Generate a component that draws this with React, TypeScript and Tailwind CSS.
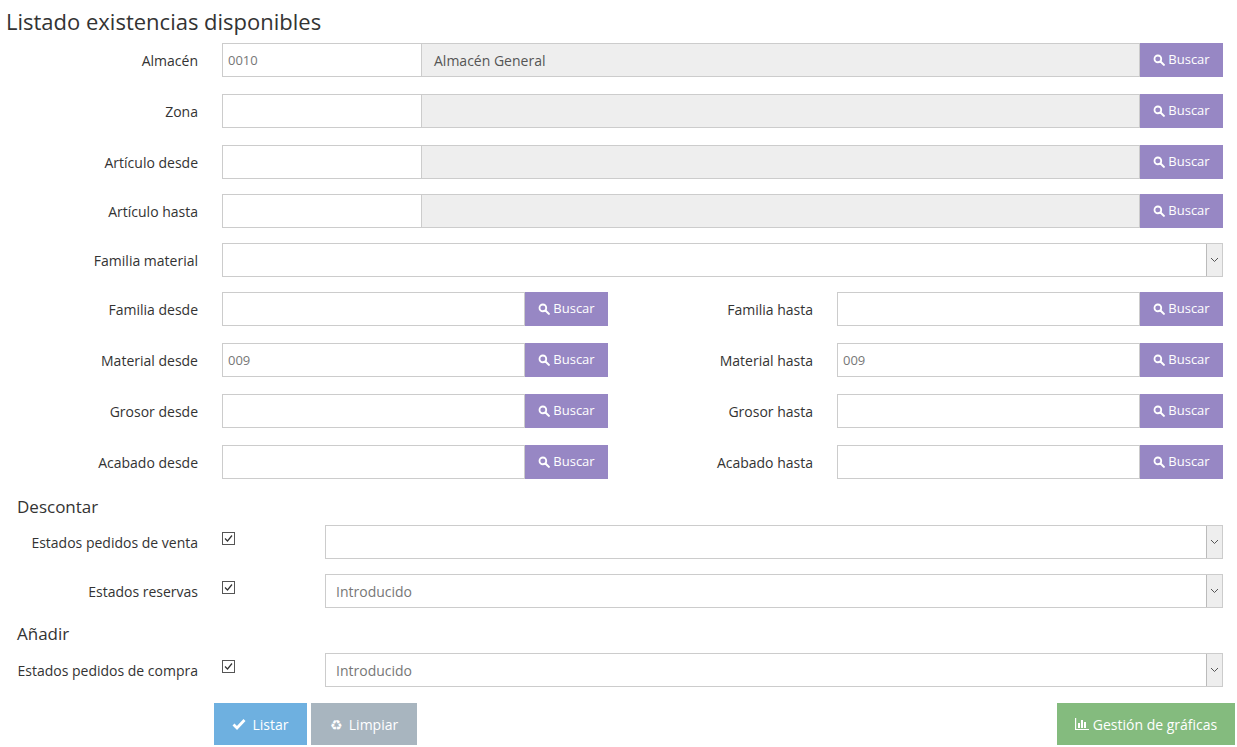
import React from "react";

const Search = () => (
  <svg width="12" height="12" viewBox="0 0 16 16" className="mr-[3px]">
    <circle cx="6.5" cy="6.5" r="4.5" fill="none" stroke="white" strokeWidth="2.4" />
    <path d="M10 10 L14.5 14.5" stroke="white" strokeWidth="2.8" strokeLinecap="round" />
  </svg>
);

const Btn = () => (
  <div className="w-[83px] h-[34px] bg-[#9787c4] text-white text-[13px] flex items-center justify-center shrink-0">
    <Search />Buscar
  </div>
);

const Label = ({ t, w = "w-[198px]" }: { t: string; w?: string }) => (
  <div className={`${w} text-right text-[14px] text-[#333] shrink-0`}>{t}</div>
);

const Input = ({ v, w }: { v?: string; w: string }) => (
  <div className={`${w} h-[34px] border border-[#ccc] bg-white text-[13px] text-[#777] px-[5px] pt-[7px] shrink-0`}>{v}</div>
);

const FullRow = ({ label, code, desc, mt }: { label: string; code?: string; desc?: string; mt: string }) => (
  <div className={`flex items-center ${mt}`}>
    <Label t={label} />
    <div className="ml-[24px] flex">
      <Input v={code} w="w-[200px]" />
      <div className="w-[718px] h-[34px] border border-l-0 border-[#ccc] bg-[#eeeeee] text-[14px] text-[#555] px-[12px] flex items-center">{desc}</div>
      <Btn />
    </div>
  </div>
);

const Caret = () => (
  <div className="w-[16px] h-[32px] bg-[#eee] border-l border-[#bbb] flex items-center justify-center">
    <svg width="9" height="6" viewBox="0 0 9 6"><path d="M1 1 L4.5 4.5 L8 1" fill="none" stroke="#555" strokeWidth="1" /></svg>
  </div>
);

const Select = ({ v, w }: { v?: string; w: string }) => (
  <div className={`${w} h-[34px] border border-[#ccc] bg-white flex items-center justify-between`}>
    <span className="px-[10px] text-[14px] text-[#777]">{v}</span>
    <Caret />
  </div>
);

const HalfRow = ({ l1, l2, v1, v2, mt }: { l1: string; l2: string; v1?: string; v2?: string; mt: string }) => (
  <div className={`flex items-center ${mt}`}>
    <Label t={l1} />
    <div className="ml-[24px] flex">
      <Input v={v1} w="w-[303px]" />
      <Btn />
    </div>
    <Label t={l2} w="w-[205px]" />
    <div className="ml-[24px] flex">
      <Input v={v2} w="w-[303px]" />
      <Btn />
    </div>
  </div>
);

const Check = () => (
  <svg width="13" height="13" viewBox="0 0 13 13" className="mt-[-8px]">
    <rect x="0.5" y="0.5" width="12" height="12" fill="white" stroke="#555" />
    <path d="M3 6.5 L5.5 9 L10 3.5" fill="none" stroke="#333" strokeWidth="1.2" />
  </svg>
);

const CheckRow = ({ label, v, mt }: { label: string; v?: string; mt: string }) => (
  <div className={`flex items-center ${mt}`}>
    <Label t={label} />
    <div className="ml-[24px] w-[103px] flex"><Check /></div>
    <Select v={v} w="w-[898px]" />
  </div>
);

export default function App() {
  return (
    <div className="w-[1237px] h-[747px] bg-white overflow-hidden" style={{ fontFamily: '"Open Sans", sans-serif' }}>
      <div className="pl-[6px] pt-[6px] text-[22px] text-[#333] leading-[30px]">Listado existencias disponibles</div>
      <FullRow label="Almacén" code="0010" desc="Almacén General" mt="mt-[7px]" />
      <FullRow label="Zona" mt="mt-[17px]" />
      <FullRow label="Artículo desde" mt="mt-[17px]" />
      <FullRow label="Artículo hasta" mt="mt-[15px]" />
      <div className="flex items-center mt-[15px]">
        <Label t="Familia material" />
        <div className="ml-[24px]"><Select w="w-[1001px]" /></div>
      </div>
      <HalfRow l1="Familia desde" l2="Familia hasta" mt="mt-[15px]" />
      <HalfRow l1="Material desde" l2="Material hasta" v1="009" v2="009" mt="mt-[17px]" />
      <HalfRow l1="Grosor desde" l2="Grosor hasta" mt="mt-[17px]" />
      <HalfRow l1="Acabado desde" l2="Acabado hasta" mt="mt-[17px]" />
      <div className="pl-[17px] text-[17px] text-[#333] mt-[15px] leading-[26px]">Descontar</div>
      <CheckRow label="Estados pedidos de venta" mt="mt-[5px]" />
      <CheckRow label="Estados reservas" v="Introducido" mt="mt-[15px]" />
      <div className="pl-[17px] text-[17px] text-[#333] mt-[13px] leading-[26px]">Añadir</div>
      <CheckRow label="Estados pedidos de compra" v="Introducido" mt="mt-[6px]" />
      <div className="flex mt-[16px] text-[14px] text-white">
        <div className="ml-[214px] w-[93px] h-[42px] bg-[#6eb0e0] flex items-center justify-center gap-[6px]">
          <svg width="14" height="12" viewBox="0 0 14 12"><path d="M1.5 6.5 L5 10 L12.5 2" fill="none" stroke="white" strokeWidth="2.8" /></svg>
          Listar
        </div>
        <div className="ml-[4px] w-[106px] h-[42px] bg-[#a8b5bf] flex items-center justify-center gap-[6px]">
          <span className="text-[14px]">♻</span>Limpiar
        </div>
        <div className="ml-auto mr-[2px] w-[178px] h-[42px] bg-[#84bb7e] flex items-center justify-center gap-[4px]">
          <svg width="14" height="12" viewBox="0 0 14 12" fill="white"><rect x="0" y="11" width="14" height="1.2" /><rect x="0" y="0" width="1.2" height="12" /><rect x="3" y="5" width="2" height="5" /><rect x="6" y="2" width="2" height="8" /><rect x="9" y="4" width="2" height="6" /></svg>
          Gestión de gráficas
        </div>
      </div>
    </div>
  );
}
